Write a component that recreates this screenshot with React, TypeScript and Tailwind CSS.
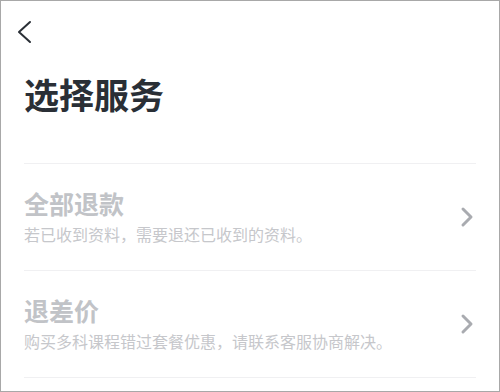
const font = { fontFamily: '"Noto Sans CJK SC", "Noto Sans", sans-serif' };

function BackIcon() {
  return (
    <svg width="18" height="24" viewBox="0 0 18 24" fill="none" className="text-[#2a2f36]">
      <polyline points="15,2 4,12 15,22" stroke="currentColor" strokeWidth="2" strokeLinecap="round" strokeLinejoin="round" />
    </svg>
  );
}

function Arrow() {
  return (
    <svg width="16" height="24" viewBox="0 0 16 24" fill="none" className="text-[#a9abb0]">
      <polyline points="3,4 11,12 3,20" stroke="currentColor" strokeWidth="3" strokeLinecap="round" strokeLinejoin="round" />
    </svg>
  );
}

export default function App() {
  const items = [
    { title: "全部退款", desc: "若已收到资料，需要退还已收到的资料。" },
    { title: "退差价", desc: "购买多科课程错过套餐优惠，请联系客服协商解决。" },
  ];

  return (
    <div className="w-[500px] h-[392px] bg-white border border-[#a8a8a8] overflow-hidden" style={font}>
      <div className="pl-[14px] pt-[19px]">
        <BackIcon />
      </div>
      <h1 className="mt-[30px] ml-[23px] text-[35px] leading-[40px] font-bold text-[#2a2f36]">选择服务</h1>

      <div className="mx-[23px] mt-[49px] border-t border-[#f0f0f2]">
        {items.map((item) => (
          <div key={item.title} className="flex items-center justify-between h-[107px] border-b border-[#f0f0f2]">
            <div className="pb-[3px]">
              <div className="text-[25px] leading-[30px] font-bold text-[#c1c3c7]">{item.title}</div>
              <div className="mt-[6px] text-[16px] leading-[20px] text-[#c6c7cb]">{item.desc}</div>
            </div>
            <Arrow />
          </div>
        ))}
      </div>
    </div>
  );
}
